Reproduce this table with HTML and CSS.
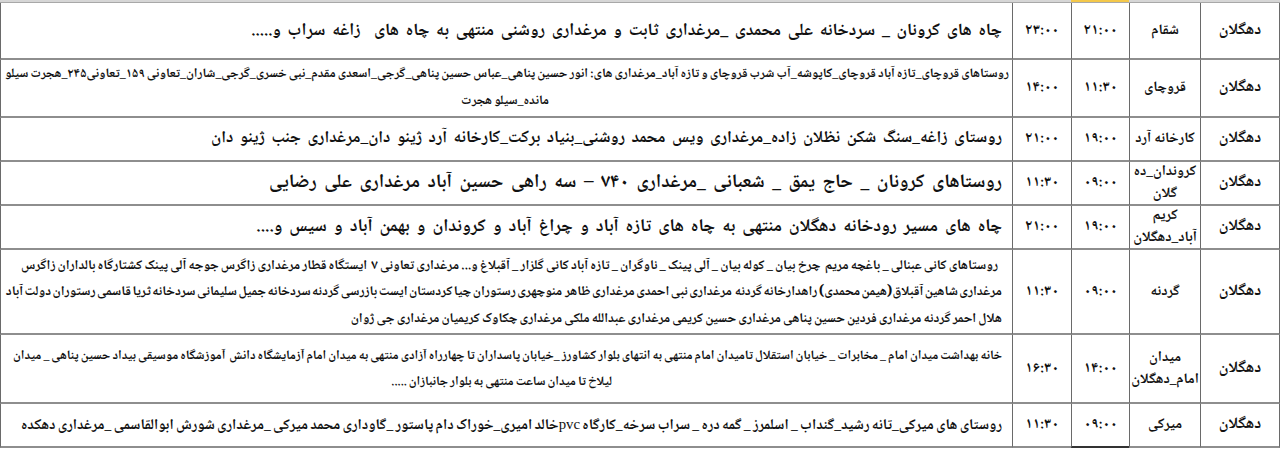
FILE: index.html
```html
<!DOCTYPE html>
<html lang="fa" dir="rtl">
<head>
<meta charset="utf-8">
<title>جدول خاموشی دهگلان</title>
<link rel="stylesheet" href="styles.css">
</head>
<body>
<div class="topbar"><span class="tb-a"></span><span class="tb-sel"></span><span class="tb-b"></span></div>
<div class="sheet">
  <div class="row">
    <div class="cell city">دهگلان</div>
    <div class="cell area">شقام</div>
    <div class="cell time">۲۱:۰۰</div>
    <div class="cell time">۲۳:۰۰</div>
    <div class="cell desc"><span class="ln" data-w="751">چاه های کرونان _ سردخانه علی محمدی _مرغداری ثابت و مرغداری روشنی منتهی به چاه های  زاغه سراب و.....</span></div>
  </div>
  <div class="row">
    <div class="cell city">دهگلان</div>
    <div class="cell area">قروچای</div>
    <div class="cell time">۱۱:۳۰</div>
    <div class="cell time">۱۴:۰۰</div>
    <div class="cell desc tight"><span class="ln" data-w="1004">روستاهای قروچای_تازه آباد قروچای_کاپوشه_آب شرب قروچای و تازه آباد_مرغداری های: انور حسین پناهی_عباس حسین پناهی_گرجی_اسعدی مقدم_نبی خسری_گرجی_شاران_تعاونی ۱۵۹_تعاونی۲۴۵_هجرت سیلو</span><span class="ln c">مانده_سیلو هجرت</span></div>
  </div>
  <div class="row">
    <div class="cell city">دهگلان</div>
    <div class="cell area">کارخانه آرد</div>
    <div class="cell time">۱۹:۰۰</div>
    <div class="cell time">۲۱:۰۰</div>
    <div class="cell desc"><span class="ln" data-w="791">روستای زاغه_سنگ شکن نظلان زاده_مرغداری ویس محمد روشنی_بنیاد برکت_کارخانه آرد ژینو دان_مرغداری جنب ژینو دان</span></div>
  </div>
  <div class="row">
    <div class="cell city">دهگلان</div>
    <div class="cell area two"><span>کروندان_ده</span><span>گلان</span></div>
    <div class="cell time">۰۹:۰۰</div>
    <div class="cell time">۱۱:۳۰</div>
    <div class="cell desc"><span class="ln" data-w="733">روستاهای کرونان _ حاج یمق _ شعبانی _مرغداری ۷۴۰ – سه راهی حسین آباد مرغداری علی رضایی</span></div>
  </div>
  <div class="row">
    <div class="cell city">دهگلان</div>
    <div class="cell area two"><span>کریم</span><span>آباد_دهگلان</span></div>
    <div class="cell time">۱۹:۰۰</div>
    <div class="cell time">۲۱:۰۰</div>
    <div class="cell desc"><span class="ln" data-w="746">چاه های مسیر رودخانه دهگلان منتهی به چاه های تازه آباد و چراغ آباد و کروندان و بهمن آباد و سیس و....</span></div>
  </div>
  <div class="row">
    <div class="cell city">دهگلان</div>
    <div class="cell area">گردنه</div>
    <div class="cell time">۰۹:۰۰</div>
    <div class="cell time">۱۱:۳۰</div>
    <div class="cell desc wide"><span class="ln indent" data-w="977">روستاهای کانی عبنالی _ باغچه مریم  چرخ بیان _ کوله بیان _ آلی پینک _ ناوگران _ تازه آباد کانی گلزار _ آقبلاغ و... مرغداری تعاونی ۷  ایستگاه قطار مرغداری زاگرس جوجه آلی پینک کشتارگاه بالداران زاگرس</span><span class="ln" data-w="983">مرغداری شاهین آقبلاق(هیمن محمدی) راهدارخانه گردنه  مرغداری نبی احمدی مرغداری ظاهر  منوچهری رستوران چیا کردستان ایست بازرسی گردنه سردخانه جمیل سلیمانی سردخانه ثریا قاسمی رستوران دولت آباد</span><span class="ln">هلال احمر گردنه مرغداری فردین حسین پناهی مرغداری حسین کریمی مرغداری عبدالله ملکی مرغداری چکاوک کریمیان مرغداری جی ژوان</span></div>
  </div>
  <div class="row">
    <div class="cell city">دهگلان</div>
    <div class="cell area two"><span>میدان</span><span>امام_دهگلان</span></div>
    <div class="cell time">۱۴:۰۰</div>
    <div class="cell time">۱۶:۳۰</div>
    <div class="cell desc"><span class="ln" data-w="989">خانه بهداشت میدان امام _ مخابرات _ خیابان استقلال تامیدان امام منتهی به انتهای بلوار کشاورز _خیابان پاسداران تا چهارراه آزادی منتهی به میدان امام آزمایشگاه دانش  آموزشگاه موسیقی بیداد حسین پناهی _ میدان</span><span class="ln c">لیلاخ تا میدان ساعت منتهی به بلوار جانبازان .....</span></div>
  </div>
  <div class="row">
    <div class="cell city">دهگلان</div>
    <div class="cell area">میرکی</div>
    <div class="cell time picked">۰۹:۰۰</div>
    <div class="cell time">۱۱:۳۰</div>
    <div class="cell desc"><span class="ln" data-w="981">روستای های میرکی_تانه رشید_گنداب _ اسلمرز _ گمه دره _ سراب سرخه_کارگاه <span class="latin">pvc</span>خالد امیری_خوراک دام پاستور _گاوداری محمد میرکی _مرغداری شورش ابوالقاسمی _مرغداری دهکده</span></div>
  </div>
</div>
<script src="script.js"></script>
</body>
</html>
```
FILE: styles.css
```css
* { box-sizing: border-box; }
html, body { margin: 0; padding: 0; background: #fff; }
body {
  font-family: "Noto Naskh Arabic", "DejaVu Sans", serif;
  font-weight: bold;
  font-size: 15px;
  color: #111;
  width: 1280px;
  direction: rtl;
}
.topbar {
  display: flex;
  height: 2px;
  background: #d6d6d6;
}
.tb-a { width: 151px; }
.tb-sel { width: 58px; background: #f4c84a; }
.tb-b { flex: 1; }
.sheet {
  display: grid;
  grid-template-columns: 80px 71px 58px 59px 1012px;
  grid-template-rows: 57px 58px 44px 44px 44px 85px 69px 44px;
  border-top: 1px solid #a8a8a8;
}
.row { display: contents; }
.cell {
  display: flex;
  flex-direction: column;
  justify-content: center;
  align-items: center;
  text-align: center;
  border-left: 1px solid #6a6a6a;
  border-bottom: 2px solid #8e8e8e;
  overflow: hidden;
  line-height: 24px;
}
.city { border-right: 1px solid #6a6a6a; font-size: 16px; }
.area { font-size: 14.5px; }
.area.two { line-height: 22px; }
.time { font-size: 15px; letter-spacing: 0.5px; }
.picked { border-bottom: 2px solid #333; }
.desc {
  align-items: flex-start;
  padding: 0 10px 0 0;
  font-size: 15px;
  line-height: 26px;
}
.desc.tight { padding-right: 3px; line-height: 27px; }
.desc.wide { line-height: 26.5px; padding-top: 4px; }
.ln { display: inline-block; white-space: pre; }
.ln.indent { margin-right: 4px; }
.desc .ln.c { align-self: center; }
.latin { font-family: "Liberation Serif", serif; font-weight: normal; }
```
FILE: script.js
```js
(function () {
  function spaces(el) { return (el.textContent.match(/ /g) || []).length || 1; }
  function width(el) { return el.getBoundingClientRect().width; }
  function clamp(v, a, b) { return Math.max(a, Math.min(b, v)); }
  document.querySelectorAll('.desc').forEach(function (cell) {
    var lines = cell.querySelectorAll('.ln');
    var first = cell.querySelector('.ln[data-w]');
    if (!first) return;
    var target = parseFloat(first.dataset.w);
    var n = spaces(first);
    var ws = clamp((target - width(first)) / n, -1, 2.5);
    first.style.wordSpacing = ws + 'px';
    var base = parseFloat(getComputedStyle(first).fontSize);
    cell.style.fontSize = (base * target / width(first)) + 'px';
    first.style.wordSpacing = (ws + (target - width(first)) / n) + 'px';
    lines.forEach(function (ln) {
      if (ln === first) return;
      if (ln.dataset.w) {
        var t = parseFloat(ln.dataset.w);
        ln.style.wordSpacing = clamp((t - width(ln)) / spaces(ln), -1.5, 6) + 'px';
      } else {
        ln.style.wordSpacing = first.style.wordSpacing;
      }
    });
  });
})();
```
